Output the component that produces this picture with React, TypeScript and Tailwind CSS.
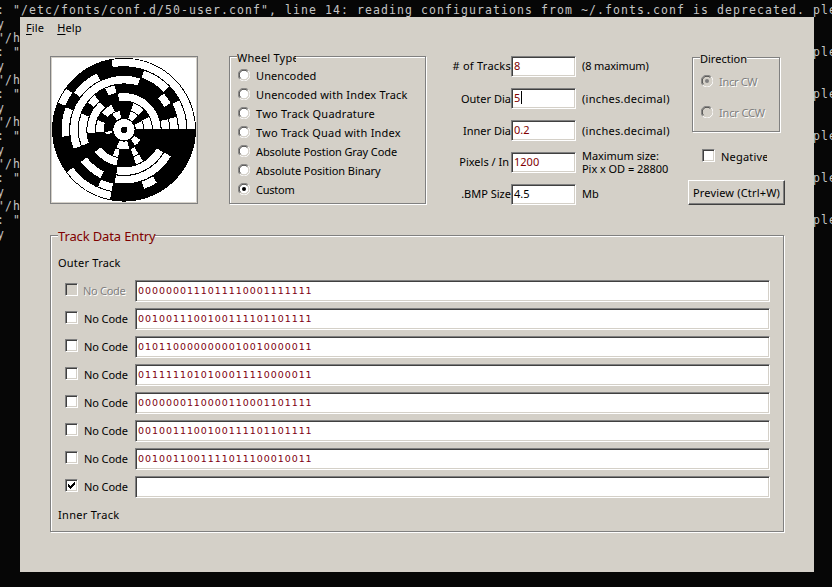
import React from "react";

const TRACKS = [
  "0000000111011110001111111",
  "0010011100100111101101111",
  "0101100000000010010000011",
  "0111111010100011110000011",
  "0000000110000110001101111",
  "0010011100100111101101111",
  "0010011001111011100010011",
  "",
];

const OUTER = 71.7;
const STEP = 8.6;
const SLICE = 14.4;

// Runs of open (white) slices, clockwise from east; a "0" bit is open and
// the bits are laid down counter-clockwise.
function runs(bits: string) {
  const found: [number, number][] = [];
  const open = bits.split("").reverse().map((b) => b === "0");
  open.forEach((on, i) => {
    if (!on) return;
    const last = found[found.length - 1];
    if (last && last[1] === i) last[1] = i + 1;
    else found.push([i, i + 1]);
  });
  return found;
}

// One ring segment, its straight edges pulled in by a little under a pixel.
function sector(r0: number, r1: number, from: number, to: number) {
  const inset = 1.4 / (r0 + r1);
  const a = (from * SLICE * Math.PI) / 180 + inset;
  const b = (to * SLICE * Math.PI) / 180 - inset;
  const large = b - a > Math.PI ? 1 : 0;
  const p = (r: number, t: number) =>
    `${(72 + r * Math.cos(t)).toFixed(2)} ${(71.7 + r * Math.sin(t)).toFixed(2)}`;
  return `M${p(r1, a)}A${r1} ${r1} 0 ${large} 1 ${p(r1, b)}L${p(r0, b)}A${r0} ${r0} 0 ${large} 0 ${p(r0, a)}Z`;
}

function Wheel() {
  return (
    <svg width="144" height="144" viewBox="0 0 144 144" shapeRendering="crispEdges">
      <circle cx="72" cy="71.7" r="71.9" fill="#000" />
      {TRACKS.map((bits, i) =>
        runs(bits)
          .filter(([from]) => !(i === 6 && from === 11))
          .map(([from, to]) => (
            <path
              key={`${i}-${from}`}
              fill="#fff"
              d={sector(OUTER - STEP * (i + 1) + 0.4, OUTER - STEP * i - 0.7, from, to)}
            />
          )),
      )}
      <path fill="#fff" d="M53 74h3v-1h4v2h-2v1h-4v-1h-1z" />
      <circle cx="72" cy="71.7" r="10.6" fill="#fff" />
      <circle cx="72.2" cy="71.9" r="3.2" fill="#000" />
    </svg>
  );
}

function Radio({ checked, disabled }: { checked?: boolean; disabled?: boolean }) {
  return (
    <svg width="12" height="12" viewBox="0 0 12 12" className="block shrink-0">
      <circle cx="6" cy="6" r="4.6" fill={disabled ? "#d4d0c8" : "#fff"} />
      <path d="M1.8 10.2A5.5 5.5 0 0 1 10.2 1.8" fill="none" stroke="#808080" />
      <path d="M2.6 9.4A4.6 4.6 0 0 1 9.4 2.6" fill="none" stroke="#404040" />
      <path d="M10.2 1.8A5.5 5.5 0 0 1 1.8 10.2" fill="none" stroke="#fff" />
      <path d="M9.4 2.6A4.6 4.6 0 0 1 2.6 9.4" fill="none" stroke="#d4d0c8" />
      {checked && <circle cx="6" cy="6" r="2" fill={disabled ? "#808080" : "#000"} />}
    </svg>
  );
}

const SUNKEN =
  "border border-t-[#808080] border-l-[#808080] border-b-white border-r-white shadow-[inset_1px_1px_0_#404040,inset_-1px_-1px_0_#d4d0c8]";
const ETCHED = "border border-[#808080] shadow-[1px_1px_0_#fff,inset_1px_1px_0_#fff]";

function Check({ checked, disabled }: { checked?: boolean; disabled?: boolean }) {
  return (
    <div className={`h-[13px] w-[13px] shrink-0 ${SUNKEN} ${disabled ? "bg-[#d4d0c8]" : "bg-white"}`}>
      {checked && (
        <svg width="11" height="11" viewBox="0 0 11 11" shapeRendering="crispEdges" className="block">
          <path d="M2 4h1v1h1v1h1v-1h1v-1h1v-1h1v-1h1v3h-1v1h-1v1h-1v1h-1v1h-1v-1h-1v-1h-1z" fill="#000" />
        </svg>
      )}
    </div>
  );
}

const DISABLED = "text-[#808080] [text-shadow:1px_1px_0_#fff]";

const WHEEL_TYPES = [
  { name: "Unencoded", track: "tracking-[0.1px]" },
  { name: "Unencoded with Index Track", track: "tracking-[0.19px]" },
  { name: "Two Track Quadrature", track: "tracking-[0.24px]" },
  { name: "Two Track Quad with Index", track: "tracking-[0.21px]" },
  { name: "Absolute Postion Gray Code", track: "tracking-[-0.1px]" },
  { name: "Absolute Position Binary", track: "tracking-[-0.06px]" },
  { name: "Custom", track: "tracking-[-0.25px]" },
];

const FIELDS = [
  { label: "# of Tracks", value: "8", hint: "(8 maximum)", side: "pb-px tracking-[0.25px]", hintTrack: "pb-[2px] tracking-[-0.15px]" },
  { label: "Outer Dia", value: "5", hint: "(inches.decimal)", side: "", hintTrack: "tracking-[0.29px]", caret: true },
  { label: "Inner Dia", value: "0.2", hint: "(inches.decimal)", side: "", hintTrack: "tracking-[0.29px]" },
  { label: "Pixels / In", value: "1200", hint: "Maximum size:\nPix x OD = 28800", side: "pb-px pr-[2px]", hintTrack: "pb-px tracking-[-0.05px]" },
  { label: ".BMP Size", value: "4.5", hint: "Mb", side: "pb-px", hintTrack: "pb-[2px]", black: true },
];

const HEADLINE =
  ': "/etc/fonts/conf.d/50-user.conf", line 14: reading configurations from ~/.fonts.conf is deprecated. ple';
const LEFT_EDGE = Array.from({ length: 16 }, (_, i) =>
  i % 3 === 0 ? "y" : i % 3 === 1 ? "\"/h" : ': "',
);
const TERM =
  "font-['DejaVu_Sans_Mono',monospace] text-[11.5px] leading-[14px] tracking-[1.077px] text-[#c4c4c4] whitespace-pre";

export default function App() {
  return (
    <div className="flex h-[587px] w-[832px] flex-col overflow-hidden bg-[#060606] font-['Noto_Sans',sans-serif] text-[11px] leading-[14px] whitespace-nowrap text-black">
      <div className={`-ml-[3px] h-[17px] shrink-0 overflow-hidden pt-[3px] ${TERM}`}>{HEADLINE}</div>

      <div className="flex h-[555px] shrink-0">
        <div className={`w-[20px] shrink-0 overflow-hidden ${TERM}`}>
          {LEFT_EDGE.map((line, i) => (
            <div key={i} className="-ml-[3px] h-[14px]">{line}</div>
          ))}
        </div>

        <div className="flex w-[794px] shrink-0 flex-col bg-[#d4d0c8]">
          <div className="flex h-[39px] gap-[13px] pt-[4px] pl-[6px] tracking-[0.15px]">
            <span><u className="underline-offset-2">F</u>ile</span>
            <span><u className="underline-offset-2">H</u>elp</span>
          </div>

          <div className="flex h-[179px] pl-[30px]">
            <div className="h-[148px] w-[148px] shrink-0 border border-[#808080] bg-white p-px shadow-[inset_1px_1px_0_#d4d0c8,inset_-1px_-1px_0_#d4d0c8]">
              <Wheel />
            </div>

            <div className={`ml-[31px] h-[148px] w-[197px] shrink-0 pl-[8px] ${ETCHED}`}>
              <div className="-mt-[6px] -ml-px h-[15px] w-[59px] overflow-hidden bg-[#d4d0c8] tracking-[0.22px]">Wheel Type</div>
              {WHEEL_TYPES.map((t) => (
                <div key={t.name} className="flex h-[19px] items-center gap-[6px]">
                  <div className="pb-px"><Radio checked={t.name === "Custom"} /></div>
                  <span className={`pt-px ${t.track}`}>{t.name}</span>
                </div>
              ))}
            </div>

            <div className="ml-[14px] flex w-[248px] shrink-0 flex-col gap-[11px]">
              {FIELDS.map((f) => (
                <div key={f.label} className="flex h-[21px] items-center">
                  <div className={`flex w-[71px] shrink-0 justify-end ${f.side}`}>{f.label}</div>
                  <div className={`flex h-[21px] w-[65px] shrink-0 items-center bg-white pb-[2px] pl-[2px] ${SUNKEN} ${f.black ? "" : "text-[#800000]"}`}>
                    {f.value}
                    {f.caret && <span className="ml-px h-[13px] w-px bg-black" />}
                  </div>
                  <div className={`ml-[6px] leading-[13px] whitespace-pre ${f.hintTrack}`}>{f.hint}</div>
                </div>
              ))}
            </div>

            <div className="flex w-[98px] shrink-0 flex-col pt-px">
              <div className={`ml-[4px] h-[75px] w-[88px] pl-[8px] ${ETCHED}`}>
                <div className="-mt-[6px] -ml-px h-[14px] w-[47px] bg-[#d4d0c8]">Direction</div>
                <div className={`mt-[8px] flex h-[14px] items-center gap-[6px] ${DISABLED}`}>
                  <Radio checked disabled />
                  <span className="pt-[2px] tracking-[-0.3px]">Incr CW</span>
                </div>
                <div className={`mt-[17px] flex h-[14px] items-center gap-[6px] ${DISABLED}`}>
                  <Radio disabled />
                  <span className="pt-[2px] tracking-[-0.15px]">Incr CCW</span>
                </div>
              </div>
              <div className="mt-[17px] ml-[14px] flex h-[13px] items-center gap-[6px]">
                <Check />
                <span className="w-[46px] overflow-hidden pt-[2px] tracking-[0.2px]">Negative</span>
              </div>
              <div className="mt-[18px] flex h-[25px] w-[97px] items-center justify-center border border-t-white border-l-white border-r-[#404040] border-b-[#404040] tracking-[0.18px] shadow-[inset_-1px_-1px_0_#808080]">
                Preview (Ctrl+W)
              </div>
            </div>
          </div>

          <div className={`ml-[30px] flex h-[297px] w-[734px] flex-col pl-[7px] ${ETCHED}`}>
            <div className="-mt-[8px] h-[16px] w-[97px] bg-[#d4d0c8] text-[13px] leading-[17px] tracking-[-0.13px] text-[#800000]">Track Data Entry</div>
            <div className="mt-[12px] h-[24px] tracking-[0.23px]">Outer Track</div>
            {TRACKS.map((bits, i) => (
              <div key={i} className="flex h-[28px] shrink-0 items-start pl-[7px]">
                <div className="pt-[3px]"><Check checked={i === 7} disabled={i === 0} /></div>
                <span className={`w-[57px] pt-[4px] ${i === 0 ? `pl-[5px] tracking-[-0.3px] ${DISABLED}` : "pl-[6px] tracking-[-0.1px]"}`}>No Code</span>
                <div className={`flex h-[22px] w-[635px] shrink-0 items-center bg-white pl-[2px] font-['DejaVu_Sans',sans-serif] text-[9.5px] tracking-[0.94px] text-[#800010] ${SUNKEN}`}>
                  {bits}
                </div>
              </div>
            ))}
            <div className="mt-[4px] tracking-[0.3px]">Inner Track</div>
          </div>
        </div>

        <div className={`w-[18px] shrink-0 overflow-hidden pt-[28px] ${TERM}`}>
          {[0, 1, 2, 3, 4].map((i) => (
            <div key={i} className="-ml-px h-[42px]">ple</div>
          ))}
        </div>
      </div>
    </div>
  );
}
